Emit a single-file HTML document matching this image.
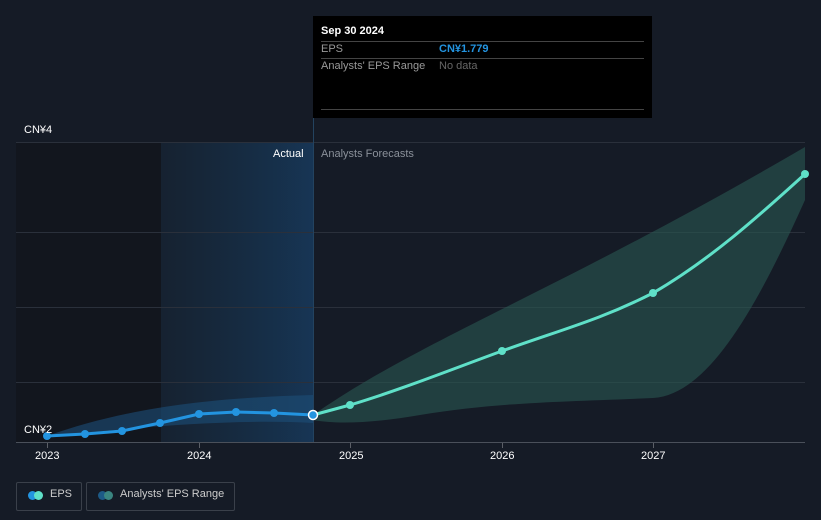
<!DOCTYPE html>
<html><head><style>
body{margin:0;width:821px;height:520px;background:#151b26;font-family:"Liberation Sans",sans-serif;overflow:hidden;position:relative}
.t{position:absolute;font-size:11px}
</style></head><body>
<svg width="821" height="520" style="position:absolute;left:0;top:0">
<defs>
<linearGradient id="hl" x1="0" x2="1"><stop offset="0" stop-color="#17324a" stop-opacity="0.3"/><stop offset="1" stop-color="#17385a" stop-opacity="0.9"/></linearGradient>
</defs>
<rect x="16" y="142" width="145" height="300" fill="#12161e"/>
<rect x="161" y="142" width="152" height="300" fill="url(#hl)"/>
<g stroke="#2a303b" stroke-width="1">
<line x1="16" y1="142.5" x2="805" y2="142.5"/>
<line x1="16" y1="232.5" x2="805" y2="232.5"/>
<line x1="16" y1="307.5" x2="805" y2="307.5"/>
<line x1="16" y1="382.5" x2="805" y2="382.5"/>
</g>
<line x1="16" y1="442.5" x2="805" y2="442.5" stroke="#4a505a"/>
<line x1="313.5" y1="16" x2="313.5" y2="442" stroke="#23435f"/>
<path d="M47,436 C120,410 200,398 313,395 L313,423 C220,418 120,430 47,436Z" fill="#1d4f78" fill-opacity="0.6"/>
<path d="M313,415 C420,340 560,290 805,147 L805,200 C760,300 710,395 653,398 C560,402 500,402 420,415 C380,422 340,425 313,420Z" fill="#2a5852" fill-opacity="0.6"/>
<path d="M47,436 L85,434 L122,431 L160,423 L199,414 L236,412 L274,413 L313,415" fill="none" stroke="#2394e0" stroke-width="3"/>
<path d="M313,415 L350,405 C400,390 450,370 502,351 C560,330 600,320 653,293 C710,260 760,215 805,174" fill="none" stroke="#5fe0c8" stroke-width="3"/>
<g fill="#2394e0"><circle cx="47" cy="436" r="4"/><circle cx="85" cy="434" r="4"/><circle cx="122" cy="431" r="4"/><circle cx="160" cy="423" r="4"/><circle cx="199" cy="414" r="4"/><circle cx="236" cy="412" r="4"/><circle cx="274" cy="413" r="4"/></g>
<circle cx="313" cy="415" r="4.5" fill="#2394e0" stroke="#fff" stroke-width="1.5"/>
<g fill="#5fe0c8"><circle cx="350" cy="405" r="4"/><circle cx="502" cy="351" r="4"/><circle cx="653" cy="293" r="4"/><circle cx="805" cy="174" r="4"/></g>
<g stroke="#fff" stroke-opacity="0.3"><line x1="47.5" y1="443" x2="47.5" y2="448"/><line x1="199.5" y1="443" x2="199.5" y2="448"/><line x1="350.5" y1="443" x2="350.5" y2="448"/><line x1="502.5" y1="443" x2="502.5" y2="448"/><line x1="653.5" y1="443" x2="653.5" y2="448"/></g>
</svg>
<div class="t" style="left:24px;top:124px;color:#fff">CN¥4</div>
<div class="t" style="left:24px;top:424px;color:#fff">CN¥2</div>
<div class="t" style="left:273px;top:148px;color:#fff">Actual</div>
<div class="t" style="left:321px;top:148px;color:#8a9099">Analysts Forecasts</div>
<div class="t" style="left:35px;top:450px;color:#fff">2023</div>
<div class="t" style="left:187px;top:450px;color:#fff">2024</div>
<div class="t" style="left:339px;top:450px;color:#fff">2025</div>
<div class="t" style="left:490px;top:450px;color:#fff">2026</div>
<div class="t" style="left:641px;top:450px;color:#fff">2027</div>
<div style="position:absolute;left:313px;top:16px;width:339px;height:102px;background:#000">
<div class="t" style="left:8px;top:9px;color:#fff;font-weight:bold">Sep 30 2024</div>
<div style="position:absolute;left:8px;right:8px;top:25px;border-top:1px solid #444"></div>
<div class="t" style="left:8px;top:27px;color:#999">EPS</div>
<div class="t" style="left:126px;top:27px;color:#2394e0;font-weight:bold">CN¥1.779</div>
<div style="position:absolute;left:8px;right:8px;top:42px;border-top:1px solid #444"></div>
<div class="t" style="left:8px;top:44px;color:#999">Analysts' EPS Range</div>
<div class="t" style="left:126px;top:44px;color:#666">No data</div>
<div style="position:absolute;left:8px;right:8px;top:93px;border-top:1px solid #444"></div>
</div>
<div style="position:absolute;left:16px;top:482px;width:64px;height:27px;border:1px solid #3a404a;border-radius:2px"></div>
<div style="position:absolute;left:28px;top:491px;width:9px;height:9px;border-radius:50%;background:#2394e0"></div>
<div style="position:absolute;left:34px;top:491px;width:9px;height:9px;border-radius:50%;background:#5fe0c8"></div>
<div class="t" style="left:50px;top:488px;color:#ccc">EPS</div>
<div style="position:absolute;left:86px;top:482px;width:147px;height:27px;border:1px solid #3a404a;border-radius:2px"></div>
<div style="position:absolute;left:98px;top:491px;width:9px;height:9px;border-radius:50%;background:#1d5a86"></div>
<div style="position:absolute;left:104px;top:491px;width:9px;height:9px;border-radius:50%;background:#3a8580"></div>
<div class="t" style="left:120px;top:488px;color:#ccc">Analysts' EPS Range</div>
</body></html>
